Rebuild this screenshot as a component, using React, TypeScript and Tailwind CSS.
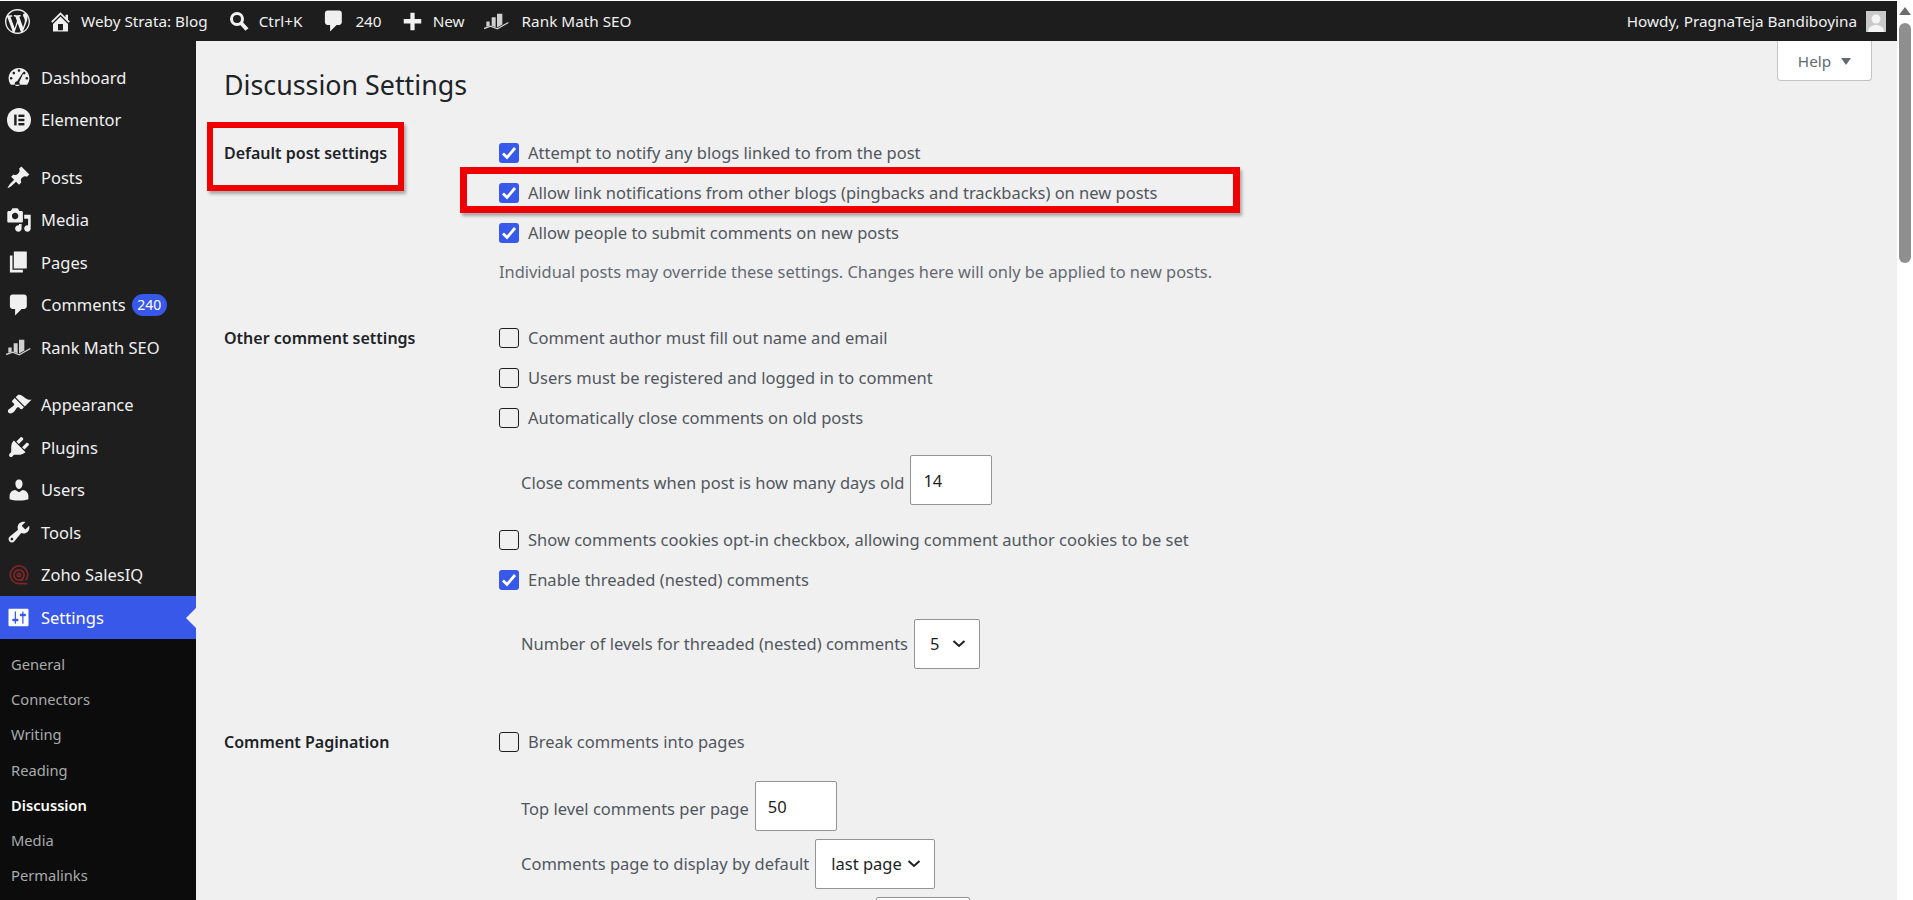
import type { ReactNode } from 'react'

const D = {
  wp: 'M20 10c0-5.51-4.49-10-10-10C4.480 0 0 4.490 0 10c0 5.520 4.480 10 10 10 5.510 0 10-4.480 10-10zM7.780 15.370L4.370 6.220c.550-.020 1.170-.080 1.170-.080.500-.060.440-1.130-.060-1.110 0 0-1.450.110-2.370.110-.180 0-.370 0-.580-.010C4.120 2.690 6.870 1.110 10 1.110c2.330 0 4.450.870 6.050 2.340-.680-.110-1.650.390-1.650 1.580 0 .740.450 1.360.900 2.100.350.610.550 1.360.550 2.460 0 1.490-1.400 5-1.400 5l-3.030-8.370c.540-.020.820-.170.820-.170.500-.050.440-1.250-.060-1.220 0 0-1.440.120-2.380.120-.870 0-2.330-.120-2.330-.120-.500-.030-.560 1.200-.060 1.220l.920.080 1.260 3.410zM17.410 10c.240-.640.740-1.870.430-4.250.700 1.290 1.050 2.710 1.050 4.250 0 3.290-1.730 6.240-4.400 7.780.970-2.590 1.940-5.200 2.920-7.780zM6.100 18.090C3.120 16.650 1.110 13.530 1.110 10c0-1.300.230-2.480.720-3.580C3.250 10.300 4.670 14.200 6.100 18.090zm4.030-6.630l2.580 6.980c-.860.290-1.760.450-2.710.450-.790 0-1.570-.110-2.290-.330.810-2.380 1.620-4.740 2.420-7.100z',
  home: 'M16 8.500l1.530 1.530-1.060 1.060L10 4.620l-6.470 6.470-1.060-1.060L10 2.500l4 4v-2h2v4zm-6-2.460l6 5.990V18H4v-5.970zM12 17v-5H8v5h4z',
  comment: 'M5 2h9c1.100 0 2 .900 2 2v7c0 1.100-.900 2-2 2h-2l-5 5v-5H5c-1.100 0-2-.900-2-2V4c0-1.100.900-2 2-2z',
  plus: 'M17 8v3.500h-5.300V17H8.300v-5.500H3V8h5.300V3h3.400v5H17z',
  post: 'M10.440 3.020l1.820-1.820 6.360 6.350-1.830 1.820c-1.050-.680-2.480-.570-3.410.360l-.750.750c-.920.930-1.040 2.350-.350 3.410l-1.830 1.820-2.410-2.410-2.800 2.790c-.420.420-3.380 2.710-3.800 2.290s1.860-3.390 2.280-3.810l2.790-2.790L4.100 9.360l1.830-1.820c1.050.690 2.480.570 3.400-.360l.750-.750c.930-.920 1.050-2.350.360-3.410z',
  media: 'M13 11V4c0-.550-.450-1-1-1h-1.670L9 1H5L3.670 3H2c-.550 0-1 .450-1 1v7c0 .550.450 1 1 1h10c.550 0 1-.450 1-1zM7 4.500c1.380 0 2.500 1.120 2.500 2.500S8.380 9.500 7 9.500 4.500 8.380 4.500 7 5.620 4.500 7 4.500zM14 6h5v10.500c0 1.380-1.120 2.500-2.500 2.500S14 17.880 14 16.500s1.120-2.500 2.500-2.500c.170 0 .340.020.500.050V9h-3V6zm-4 8.050V13h2v3.500c0 1.380-1.120 2.500-2.500 2.500S7 17.880 7 16.500 8.120 14 9.500 14c.170 0 .340.020.500.050z',
  page: 'M6 15V2h10v13H6zm-1 1h8v2H3V5h2v11z',
  appearance: 'M14.480 11.060L7.410 3.990l1.500-1.500c.500-.560 2.300-.470 3.510.320 1.210.800 1.430 1.280 2.910 2.100 1.180.640 2.450 1.260 4.450.850zm-.710.710L6.700 4.700 4.930 6.470c-.390.390-.390 1.020 0 1.410l1.060 1.060c.390.390.390 1.030 0 1.420-.600.600-1.430 1.110-2.210 1.690-.350.260-.700.530-1.010.840C1.430 13.230.990 15 2 16s2.770.570 4.110-.770c.310-.310.580-.660.840-1.010.580-.780 1.090-1.610 1.690-2.210.390-.390 1.020-.390 1.410 0l1.060 1.060c.390.390 1.020.390 1.410 0z',
  plugin: 'M13.110 4.360L9.870 7.600 8 5.730l3.240-3.240c.350-.340 1.050-.200 1.560.320.520.510.660 1.210.310 1.550zm-8 1.770l.910-1.120 9.010 9.010-1.190.840c-.710.710-2.630 1.160-3.820 1.160H6.140L4.900 17.260c-.590.590-1.540.590-2.120 0-.590-.580-.590-1.530 0-2.120l1.240-1.240v-3.880c0-1.130.400-3.190 1.090-3.890zm7.260 3.970l3.240-3.240c.340-.350 1.040-.210 1.550.310.520.510.660 1.210.31 1.550l-3.240 3.250z',
  users: 'M10 9.250c-2.270 0-2.730-3.440-2.730-3.440C7 4.020 7.820 2 9.970 2c2.160 0 2.980 2.020 2.710 3.810 0 0-.410 3.440-2.680 3.440zm0 2.570L12.720 10c2.390 0 4.520 2.330 4.520 4.530v2.490s-3.650 1.130-7.240 1.130c-3.650 0-7.240-1.130-7.240-1.130v-2.490c0-2.250 1.940-4.480 4.470-4.480z',
  tools: 'M16.680 9.770c-1.340 1.340-3.300 1.670-4.950.990l-5.410 6.520c-.990.990-2.590.990-3.580 0s-.990-2.590 0-3.570l6.520-5.420c-.680-1.650-.350-3.610.990-4.950 1.280-1.280 3.120-1.620 4.720-1.060l-2.890 2.890 2.820 2.820 2.860-2.870c.530 1.580.180 3.390-1.080 4.650zM3.810 16.210c.400.390 1.040.390 1.430 0 .400-.400.400-1.040 0-1.430-.390-.400-1.030-.400-1.430 0-.390.390-.390 1.030 0 1.430z',
  settings: 'M18 16V4c0-.550-.450-1-1-1H3c-.550 0-1 .450-1 1v12c0 .550.450 1 1 1h14c.550 0 1-.450 1-1zM8 11h1c.550 0 1 .450 1 1s-.450 1-1 1H8v1.500c0 .280-.220.500-.500.500s-.500-.220-.500-.500V13H6c-.550 0-1-.450-1-1s.450-1 1-1h1V5.500c0-.280.220-.500.500-.500s.500.220.500.500V11zm5-2h-1c-.550 0-1-.450-1-1s.450-1 1-1h1V5.500c0-.280.220-.500.500-.500s.500.220.500.500V7h1c.550 0 1 .450 1 1s-.450 1-1 1h-1v5.500c0 .280-.220.500-.500.500s-.500-.220-.500-.500V9z',
  dashboard: 'M3.760 16h12.480c1.100-1.370 1.760-3.110 1.760-5 0-4.420-3.580-8-8-8s-8 3.580-8 8c0 1.890.660 3.630 1.760 5zM10 4c.550 0 1 .450 1 1s-.450 1-1 1-1-.450-1-1 .450-1 1-1zM6 6c.550 0 1 .450 1 1s-.450 1-1 1-1-.450-1-1 .450-1 1-1zm8 0c.550 0 1 .450 1 1s-.450 1-1 1-1-.450-1-1 .450-1 1-1zm-5.370 7.290L12.720 7l.500.300-3.090 6.650c.340.360.550.850.550 1.380 0 1.100-.900 1.670-2 1.670s-2-.570-2-1.670c0-1.090.890-1.980 1.950-2.040zM4 10c.550 0 1 .450 1 1s-.450 1-1 1-1-.450-1-1 .450-1 1-1zm12 0c.550 0 1 .450 1 1s-.450 1-1 1-1-.450-1-1 .450-1 1-1z',
}

function Icon({ d, className }: { d: string; className: string }) {
  return (
    <svg viewBox="0 0 20 20" fill="currentColor" className={className}>
      <path d={d} />
    </svg>
  )
}

function RankMathIcon({ className }: { className: string }) {
  return (
    <svg viewBox="0 0 75 50" fill="currentColor" className={className}>
      <path d="M7 25h10v13l-10 3zM23 12h12v30l-12-4zM39 2h16v32l-16 9z" opacity="0.85" />
      <path d="M0 46l20-7 20 8 33-19" fill="none" stroke="currentColor" strokeWidth="4" opacity="0.85" />
    </svg>
  )
}

function ElementorIcon({ className }: { className: string }) {
  return (
    <svg viewBox="0 0 20 20" className={className}>
      <circle cx="10" cy="10" r="10" fill="currentColor" />
      <rect x="6" y="5.500" width="2" height="9" fill="#1e1e1e" />
      <rect x="9.500" y="5.500" width="5" height="2" fill="#1e1e1e" />
      <rect x="9.500" y="9" width="5" height="2" fill="#1e1e1e" />
      <rect x="9.500" y="12.500" width="5" height="2" fill="#1e1e1e" />
    </svg>
  )
}

function ZohoIcon({ className }: { className: string }) {
  return (
    <svg viewBox="0 0 20 20" fill="none" stroke="#7c2626" strokeWidth="1.600" className={className}>
      <path d="M17.500 17.800H10a8 8 0 1 1 8-8c0 2.200-.800 3.600-2 4.800" />
      <circle cx="10" cy="10" r="4.600" />
      <circle cx="10" cy="10" r="1.500" />
      <path d="M10 14.600h4" />
    </svg>
  )
}

function MenuItem({ icon, label, badge, active }: { icon: ReactNode; label: string; badge?: string; active?: boolean }) {
  return (
    <div className={`relative flex h-[42.5px] items-center text-[16.5px] text-[#f0f0f1] ${active ? 'bg-[#3858e9] text-white' : ''}`}>
      <div className="flex w-[41px] shrink-0 justify-center pr-[4px]">{icon}</div>
      <span className="pt-[2px]">{label}</span>
      {badge && (
        <span className="ml-[6px] flex h-[22px] w-[35px] items-center justify-center rounded-full bg-[#3858e9] text-[14px] text-white">
          {badge}
        </span>
      )}
      {active && (
        <div className="absolute right-0 top-[12px] h-0 w-0 border-y-[10px] border-r-[10px] border-y-transparent border-r-[#f0f0f0]" />
      )}
    </div>
  )
}

function TopItem({ icon, label, className }: { icon: ReactNode; label: string; className: string }) {
  return (
    <div className={`flex items-center ${className}`}>
      {icon}
      <span>{label}</span>
    </div>
  )
}

function Check({ label, checked }: { label: string; checked?: boolean }) {
  return (
    <div className="flex h-[40px] items-center">
      {checked ? (
        <div className="flex h-[20px] w-[20px] items-center justify-center rounded-[3px] bg-[#3858e9]">
          <svg viewBox="0 0 20 20" className="h-[20px] w-[20px]" fill="none" stroke="white" strokeWidth="2.800">
            <path d="M4 10.500l4 4 8-9.500" />
          </svg>
        </div>
      ) : (
        <div className="h-[20px] w-[20px] rounded-[3px] border border-[#1e1e1e] bg-transparent" />
      )}
      <span className="ml-[9px] text-[#50575e]">{label}</span>
    </div>
  )
}

function NumberField({ label, value, className }: { label: string; value: string; className: string }) {
  return (
    <div className={`flex items-center pl-[22px] text-[#50575e] ${className}`}>
      <span className="mt-[6px]">{label}</span>
      <div className="ml-[6px] flex h-[50px] w-[82px] items-center rounded-[2px] border border-[#949494] bg-white pl-[12px] pt-[3px] text-[#1e1e1e]">
        {value}
      </div>
    </div>
  )
}

function SelectField({ label, value, width, className }: { label: string; value: string; width: string; className: string }) {
  return (
    <div className={`flex items-center pl-[22px] text-[#50575e] ${className}`}>
      <span>{label}</span>
      <div className={`ml-[6px] flex h-[50px] items-center justify-between rounded-[2px] border border-[#949494] bg-white pl-[15px] pr-[13px] text-[#1e1e1e] ${width}`}>
        <span>{value}</span>
        <svg viewBox="0 0 14 10" className="h-[10px] w-[14px]" fill="none" stroke="#1e1e1e" strokeWidth="2">
          <path d="M1.500 2l5.500 5 5.500-5" />
        </svg>
      </div>
    </div>
  )
}

function Section({ title, className, children }: { title: string; className: string; children: ReactNode }) {
  return (
    <div className={`flex ${className}`}>
      <div className="flex h-[40px] w-[275px] shrink-0 items-center text-[16px] font-semibold text-[#1d2327]">{title}</div>
      <div>{children}</div>
    </div>
  )
}

const SUBMENU = ['General', 'Connectors', 'Writing', 'Reading', 'Discussion', 'Media', 'Permalinks']

export default function App() {
  return (
    <div className="flex h-[900px] overflow-hidden bg-white font-['Noto_Sans',sans-serif] text-[16.5px]">
      <div className="flex w-[1897px] shrink-0 flex-col pt-px">
        {/* Admin bar */}
        <div className="flex h-[40px] shrink-0 items-center bg-[#1d1d1d] text-[15.3px] text-[#f0f0f1]">
          <Icon d={D.wp} className="ml-[5px] h-[25px] w-[25px]" />
          <TopItem className="ml-[18px]" label="Weby Strata: Blog" icon={<Icon d={D.home} className="mr-[8px] h-[25px] w-[25px]" />} />
          <TopItem
            className="ml-[21px]"
            label="Ctrl+K"
            icon={
              <svg viewBox="0 0 20 20" fill="none" stroke="currentColor" className="mr-[10px] h-[20px] w-[20px]">
                <circle cx="8" cy="8" r="5.500" strokeWidth="3" />
                <path d="M12 12l6 6.500" strokeWidth="4" />
              </svg>
            }
          />
          <TopItem className="ml-[19px]" label="240" icon={<Icon d={D.comment} className="mr-[8px] h-[26px] w-[26px]" />} />
          <TopItem className="ml-[18px]" label="New" icon={<Icon d={D.plus} className="mr-[8px] h-[25px] w-[25px]" />} />
          <TopItem className="ml-[19px]" label="Rank Math SEO" icon={<RankMathIcon className="mr-[13px] h-[17px] w-[25px]" />} />
          <div className="ml-auto flex items-center pr-[11px]">
            <span>Howdy, PragnaTeja Bandiboyina</span>
            <div className="ml-[9px] flex h-[21px] w-[20px] items-end justify-center overflow-hidden bg-[#c9c9c9]">
              <svg viewBox="0 0 20 21" className="h-[21px] w-[20px]" fill="#f4f4f4">
                <circle cx="10" cy="8" r="4.500" />
                <path d="M2 21c0-5 4-7 8-7s8 2 8 7z" />
              </svg>
            </div>
          </div>
        </div>

        <div className="flex min-h-0 flex-1">
          {/* Sidebar */}
          <div className="w-[196px] shrink-0 bg-[#1e1e1e] pt-[15px]">
            <MenuItem icon={<Icon d={D.dashboard} className="h-[26px] w-[26px]" />} label="Dashboard" />
            <MenuItem icon={<ElementorIcon className="h-[24px] w-[24px]" />} label="Elementor" />
            <div className="h-[15px]" />
            <MenuItem icon={<Icon d={D.post} className="h-[25px] w-[25px]" />} label="Posts" />
            <MenuItem icon={<Icon d={D.media} className="h-[26px] w-[26px]" />} label="Media" />
            <MenuItem icon={<Icon d={D.page} className="h-[26px] w-[26px]" />} label="Pages" />
            <MenuItem icon={<Icon d={D.comment} className="h-[26px] w-[26px]" />} label="Comments" badge="240" />
            <MenuItem icon={<RankMathIcon className="h-[17px] w-[25px]" />} label="Rank Math SEO" />
            <div className="h-[15px]" />
            <MenuItem icon={<Icon d={D.appearance} className="h-[26px] w-[26px]" />} label="Appearance" />
            <MenuItem icon={<Icon d={D.plugin} className="h-[26px] w-[26px]" />} label="Plugins" />
            <MenuItem icon={<Icon d={D.users} className="h-[26px] w-[26px]" />} label="Users" />
            <MenuItem icon={<Icon d={D.tools} className="h-[26px] w-[26px]" />} label="Tools" />
            <MenuItem icon={<ZohoIcon className="h-[22px] w-[22px]" />} label="Zoho SalesIQ" />
            <MenuItem icon={<Icon d={D.settings} className="h-[25px] w-[25px]" />} label="Settings" active />
            <div className="h-[300px] bg-[#0c0c0c] pt-[8px]">
              {SUBMENU.map((s) => (
                <div
                  key={s}
                  className={`flex h-[35.2px] items-center pl-[11px] text-[14.7px] ${s === 'Discussion' ? 'font-semibold text-white' : 'text-[#a9aaab]'}`}
                >
                  {s}
                </div>
              ))}
            </div>
          </div>

          {/* Content */}
          <div className="relative min-w-0 flex-1 bg-[#f0f0f0] pl-[28px]">
            <div className="absolute right-[25px] top-0 flex h-[40px] w-[95px] items-center justify-center gap-[10px] rounded-b-[4px] border border-t-0 border-[#c3c4c7] bg-white pt-px text-[15.3px] text-[#646970]">
              <span>Help</span>
              <div className="h-0 w-0 border-x-[5px] border-t-[7px] border-x-transparent border-t-[#646970]" />
            </div>

            <h1 className="pt-[24px] text-[26.8px] leading-[40px] text-[#1d2327]">Discussion Settings</h1>

            <Section title="Default post settings" className="mt-[28px]">
              <Check checked label="Attempt to notify any blogs linked to from the post" />
              <Check checked label="Allow link notifications from other blogs (pingbacks and trackbacks) on new posts" />
              <Check checked label="Allow people to submit comments on new posts" />
              <div className="flex h-[39px] items-center text-[16.4px] text-[#646970]">
                Individual posts may override these settings. Changes here will only be applied to new posts.
              </div>
            </Section>

            <Section title="Other comment settings" className="mt-[26px]">
              <Check label="Comment author must fill out name and email" />
              <Check label="Users must be registered and logged in to comment" />
              <Check label="Automatically close comments on old posts" />
              <NumberField label="Close comments when post is how many days old" value="14" className="mt-[17px]" />
              <div className="mt-[15px]">
                <Check label="Show comments cookies opt-in checkbox, allowing comment author cookies to be set" />
                <Check checked label="Enable threaded (nested) comments" />
              </div>
              <SelectField label="Number of levels for threaded (nested) comments" value="5" width="w-[66px]" className="mt-[19px]" />
            </Section>

            <Section title="Comment Pagination" className="mt-[53px]">
              <Check label="Break comments into pages" />
              <NumberField label="Top level comments per page" value="50" className="mt-[19px]" />
              <SelectField label="Comments page to display by default" value="last page" width="w-[120px]" className="mt-[8px]" />
              {/* next row starts right at the fold, only the top of its select shows */}
              <div className="ml-[377px] mt-[8px] h-[50px] w-[94px] rounded-[2px] border border-[#949494] bg-white" />
            </Section>

            {/* annotation boxes */}
            <div className="absolute left-[11px] top-[81px] h-[69px] w-[197px] border-[6px] border-[#f00000] shadow-[2px_3px_3px_rgba(0,0,0,0.3)]" />
            <div className="absolute left-[264px] top-[126px] h-[46px] w-[780px] border-[7px] border-[#f00000] shadow-[2px_3px_3px_rgba(0,0,0,0.3)]" />
          </div>
        </div>
      </div>

      {/* Scrollbar */}
      <div className="flex w-[16px] shrink-0 flex-col items-center bg-white pt-[7px]">
        <div className="h-0 w-0 border-x-[6px] border-b-[8px] border-x-transparent border-b-[#6b6b6b]" />
        <div className="mt-[8px] h-[240px] w-[12px] rounded-full bg-[#8f8f8f]" />
      </div>
    </div>
  )
}
